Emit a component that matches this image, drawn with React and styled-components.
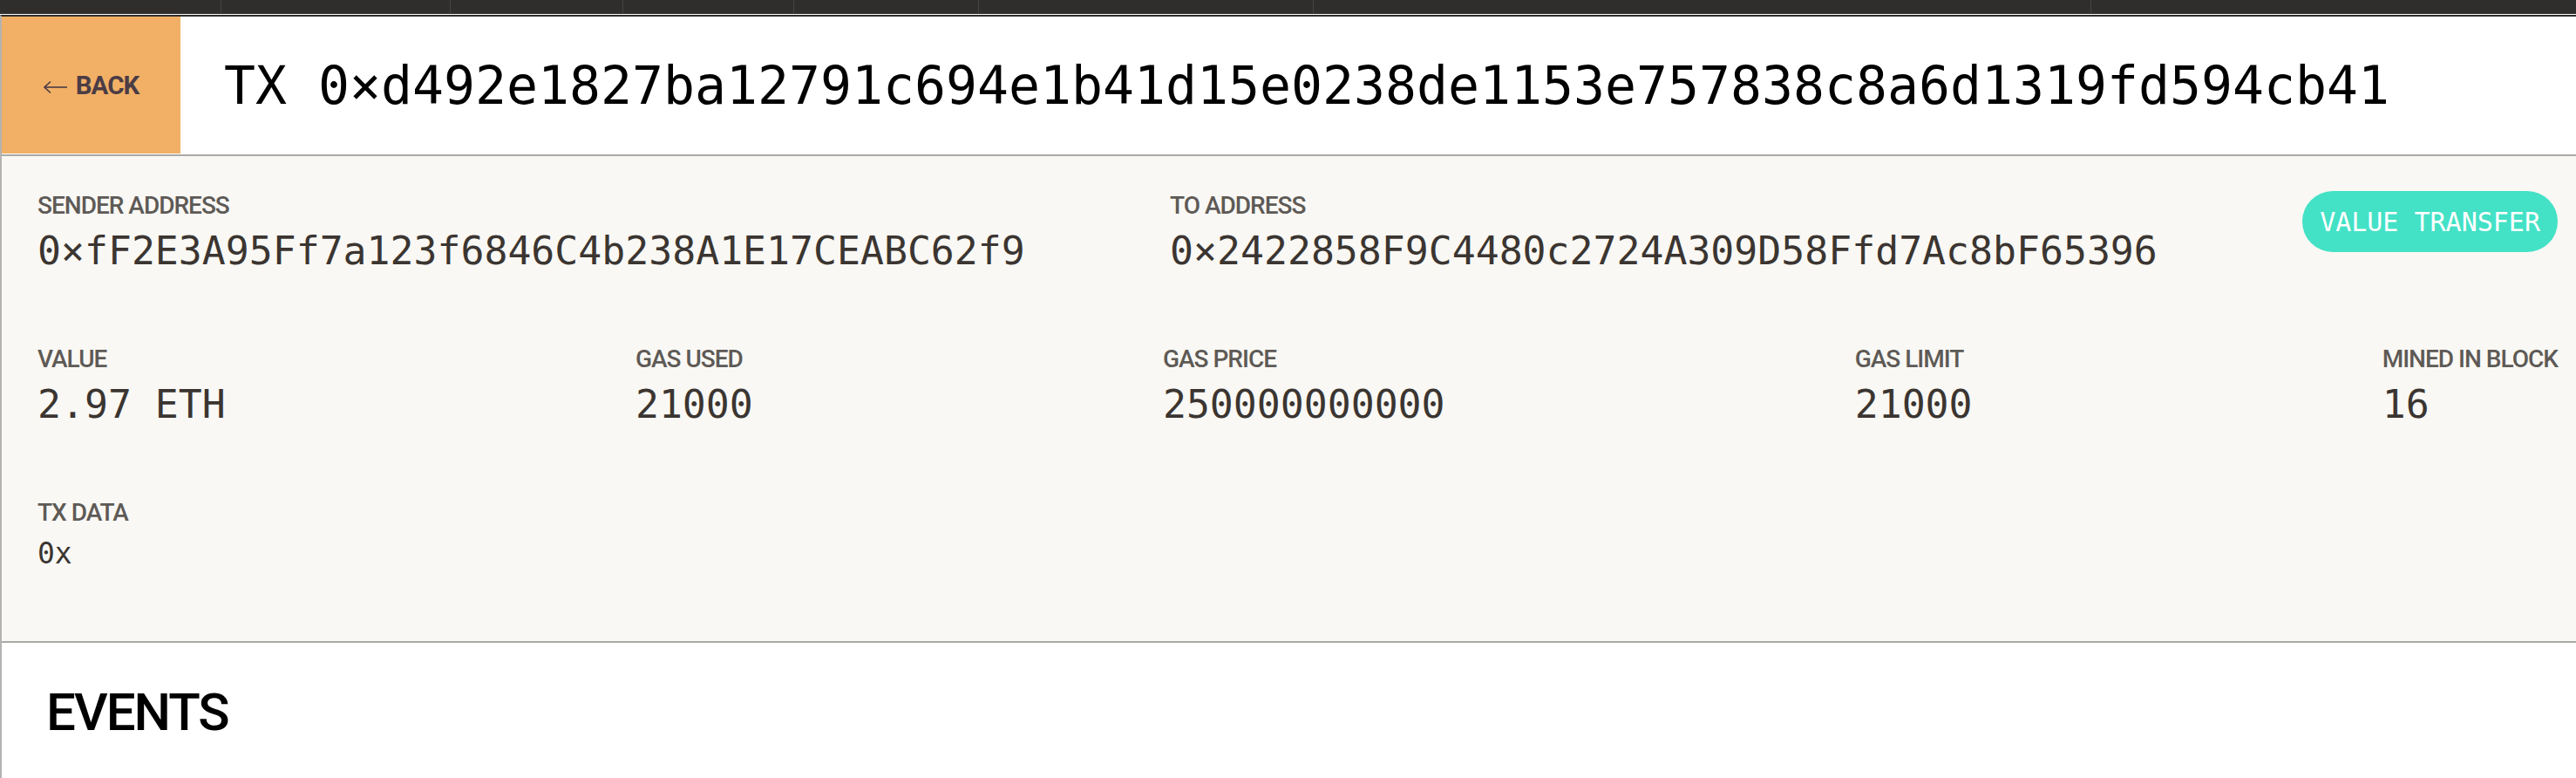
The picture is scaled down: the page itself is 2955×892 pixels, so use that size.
import React from "react";
import styled, { createGlobalStyle } from "styled-components";

const GlobalStyle = createGlobalStyle`
  html, body {
    margin: 0;
    padding: 0;
    background: #ffffff;
    overflow: hidden;
  }
  * { box-sizing: border-box; }
`;

const MONO = `"DejaVu Sans Mono", "Liberation Mono", monospace`;
const SANS = `Roboto, "Liberation Sans", sans-serif`;

const Page = styled.div`
  display: flex;
  flex-direction: column;
  min-height: 100vh;
`;

const StatusBar = styled.div`
  display: flex;
  height: 17px;
  background: #2f2e2c;
  border-bottom: 1px solid #ffffff;
`;

const StatusCell = styled.div`
  flex: ${(p) => (p.$w ? `0 0 ${p.$w}px` : "1 1 auto")};
  height: 15px;
  border-right: ${(p) => (p.$w ? "1px solid #45443f" : "none")};
`;

const Main = styled.div`
  flex: 1;
  display: flex;
  flex-direction: column;
  border-left: 2px solid #b3b3b1;
  border-top: 2px solid #2f2e2c;
`;

const Header = styled.header`
  display: flex;
  align-items: stretch;
  height: 160px;
  padding-bottom: 1px;
  background: #ffffff;
  border-bottom: 2px solid #a9a9a5;
`;

const BackButton = styled.button`
  flex: 0 0 205px;
  display: flex;
  align-items: center;
  justify-content: center;
  gap: 9px;
  border: none;
  margin: 0;
  padding: 0;
  background: #f2b066;
  color: #4b3c45;
  font-family: ${SANS};
  font-weight: 700;
  font-size: 29.5px;
  letter-spacing: -1px;
  cursor: pointer;
`;

const ArrowIcon = styled.svg`
  width: 28px;
  height: 16px;
  margin-top: 4px;
  flex: 0 0 auto;
`;

const Title = styled.h1`
  display: flex;
  align-items: center;
  margin: 0;
  padding-left: 50px;
  font-family: ${MONO};
  font-weight: 400;
  font-size: 59.8px;
  color: #000000;
  white-space: nowrap;
`;

const Details = styled.section`
  display: flex;
  flex-direction: column;
  gap: 81px;
  padding: 40px 21px 81px 41px;
  background: #f9f8f4;
  border-bottom: 2px solid #a9a9a7;
`;

const Row = styled.div`
  display: flex;
  justify-content: space-between;
  align-items: flex-start;
`;

const Field = styled.div`
  display: flex;
  flex-direction: column;
  gap: ${(p) => (p.$small ? "11px" : "9px")};
`;

const Label = styled.div`
  font-family: ${SANS};
  font-weight: 500;
  font-size: 28px;
  letter-spacing: -1px;
  color: #5e5a56;
  text-transform: uppercase;
  white-space: nowrap;
`;

const Value = styled.div`
  font-family: ${MONO};
  font-size: ${(p) => (p.$small ? "33px" : "44.8px")};
  color: #3b3531;
  white-space: nowrap;
`;

const Badge = styled.div`
  display: inline-flex;
  align-items: center;
  height: 70px;
  padding: 0 20px;
  border-radius: 35px;
  background: #43e1c6;
  color: #ffffff;
  font-family: ${MONO};
  font-size: 30px;
  white-space: nowrap;
`;

const Events = styled.section`
  flex: 1;
  background: #ffffff;
  padding: 44px 0 0 51px;
`;

const EventsTitle = styled.h2`
  margin: 0;
  font-family: ${SANS};
  font-weight: 500;
  font-size: 60px;
  letter-spacing: -2px;
  color: #000000;
`;

const statusCells = [254, 263, 198, 196, 212, 384, 892, null];

export default function App() {
  return (
    <>
      <GlobalStyle />
      <Page>
        <StatusBar>
          {statusCells.map((w, i) => (
            <StatusCell key={i} $w={w} />
          ))}
        </StatusBar>
        <Main>
          <Header>
            <BackButton>
              <ArrowIcon viewBox="0 0 28 16" fill="none" stroke="currentColor" strokeWidth="1.6">
                <path d="M1 8 H27" />
                <path d="M8 1.5 L1 8 L8 14.5" />
              </ArrowIcon>
              BACK
            </BackButton>
            <Title>TX 0×d492e1827ba12791c694e1b41d15e0238de1153e757838c8a6d1319fd594cb41</Title>
          </Header>
          <Details>
            <Row>
              <Field>
                <Label>Sender Address</Label>
                <Value>0×fF2E3A95Ff7a123f6846C4b238A1E17CEABC62f9</Value>
              </Field>
              <Field>
                <Label>To Address</Label>
                <Value>0×2422858F9C4480c2724A309D58Ffd7Ac8bF65396</Value>
              </Field>
              <Badge>VALUE TRANSFER</Badge>
            </Row>
            <Row>
              <Field>
                <Label>Value</Label>
                <Value>2.97 ETH</Value>
              </Field>
              <Field>
                <Label>Gas Used</Label>
                <Value>21000</Value>
              </Field>
              <Field>
                <Label>Gas Price</Label>
                <Value>250000000000</Value>
              </Field>
              <Field>
                <Label>Gas Limit</Label>
                <Value>21000</Value>
              </Field>
              <Field>
                <Label>Mined In Block</Label>
                <Value>16</Value>
              </Field>
            </Row>
            <Row>
              <Field $small>
                <Label>TX Data</Label>
                <Value $small>0x</Value>
              </Field>
            </Row>
          </Details>
          <Events>
            <EventsTitle>EVENTS</EventsTitle>
          </Events>
        </Main>
      </Page>
    </>
  );
}
